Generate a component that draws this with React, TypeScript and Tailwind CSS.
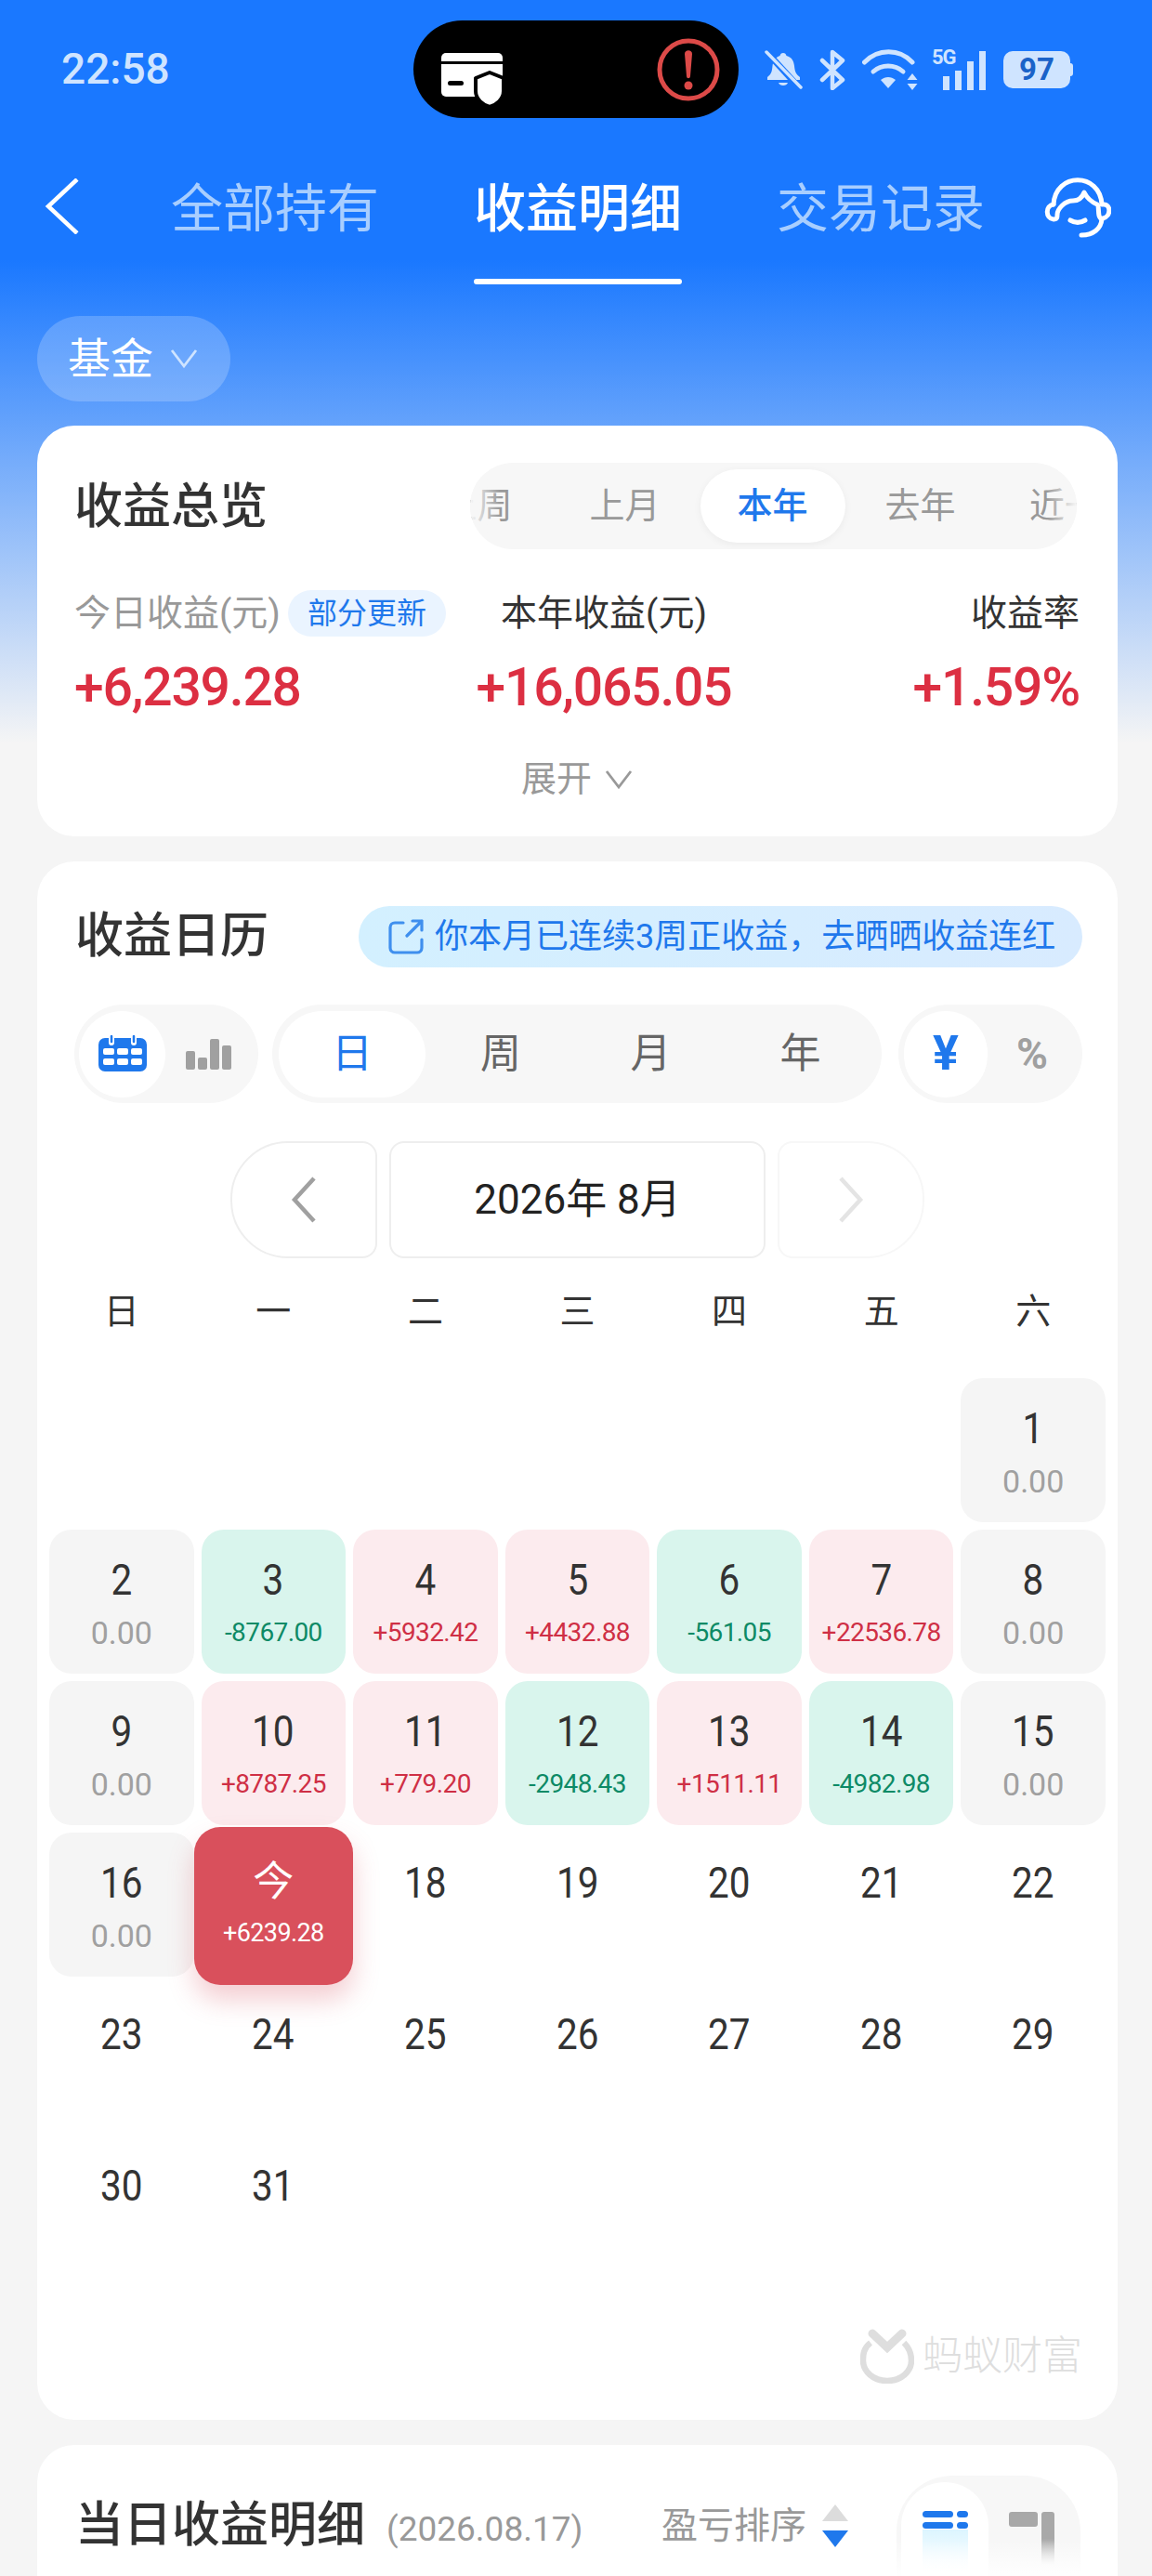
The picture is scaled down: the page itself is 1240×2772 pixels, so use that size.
const font = "font-[Roboto,'Noto_Sans_CJK_SC',sans-serif]"

const StatusIcons = () => {
    return (
        <div className="flex items-center ml-[28px] h-[105px] text-[#cfe4ff]">
            <svg width="41" height="42" viewBox="0 0 41 42" fill="none">
                <path d="M20 3c2 0 3 1 3.500 3 6 1.500 8 6 8.500 11 .5 6 2 9 6 12v3H3v-3c4-3 5-6 5.500-12 .5-5 3-9.500 8-11C17 4 18 3 20 3z" fill="#cfe4ff" />
                <path d="M15 35h10c-1 4-9 4-10 0z" fill="#cfe4ff" />
                <path d="M5 5l33 36" stroke="#1a78ff" strokeWidth="7" />
                <path d="M2 2l37 38" stroke="#cfe4ff" strokeWidth="3.500" strokeLinecap="round" />
            </svg>
            <svg className="ml-[18px]" width="28" height="44" viewBox="0 0 28 44" fill="none" stroke="#cfe4ff" strokeWidth="4.500" strokeLinejoin="round" strokeLinecap="round">
                <path d="M3 12l22 21-11 9V3l11 9L3 33" />
            </svg>
            <svg className="ml-[18px]" width="60" height="44" viewBox="0 0 60 44" fill="none">
                <path d="M2.500 14C17-1 40-1 54 14" stroke="#cfe4ff" strokeWidth="5" strokeLinecap="round" />
                <path d="M12 24c9-8 23-8 32 0" stroke="#cfe4ff" strokeWidth="5" strokeLinecap="round" />
                <path d="M20 33c5-4 11-4 16 0l-8 9z" fill="#cfe4ff" />
                <path d="M54 26l5.500 7h-11zM54 44l5.500-7h-11z" fill="#cfe4ff" />
            </svg>
            <div className="relative ml-[15px] w-[57px] h-[44px]">
                <div className="absolute left-0 -top-[2px] text-[22px] leading-[22px] font-bold tracking-[-1px]">5G</div>
                <div className="absolute left-[12px] bottom-0 flex items-end gap-[6px]">
                    <div className="w-[7px] h-[15px] bg-[#cfe4ff]" />
                    <div className="w-[7px] h-[21px] bg-[#cfe4ff]" />
                    <div className="w-[7px] h-[31px] bg-[#cfe4ff]" />
                    <div className="w-[7px] h-[42px] bg-[#cfe4ff]" />
                </div>
            </div>
            <div className="flex items-center ml-[20px]">
                <div className="w-[72px] h-[40px] rounded-[10px] bg-[#cfe4ff] text-[#1a62c8] flex items-center justify-center text-[33px] font-bold">97</div>
                <div className="w-[3px] h-[14px] rounded-r bg-[#cfe4ff]" />
            </div>
        </div>
    )
}

const Island = () => {
    return (
        <div className="w-[350px] h-[105px] rounded-full bg-black flex items-center justify-between pl-[30px] pr-[20px] shrink-0">
            <svg className="mt-[24px]" width="70" height="60" viewBox="0 0 70 60" fill="none">
                <rect x="0" y="0" width="66" height="47" rx="5" fill="#fff" />
                <rect x="0" y="9" width="66" height="3" fill="#000" />
                <rect x="7" y="30" width="17" height="5" rx="2.500" fill="#000" />
                <path d="M52 21l15 6v14c0 9-8 15-15 17-7-2-15-8-15-17V27z" fill="#fff" stroke="#000" strokeWidth="4" strokeLinejoin="round" />
            </svg>
            <svg width="68" height="68" viewBox="0 0 68 68" fill="none">
                <circle cx="34" cy="34" r="31" stroke="#dc4a48" strokeWidth="5" />
                <path d="M30 17c0-5 8-5 8 0l-2 24c-.2 3-3.800 3-4 0z" fill="#dc4a48" />
                <circle cx="34" cy="51" r="4.500" fill="#dc4a48" />
            </svg>
        </div>
    )
}

const Headset = () => {
    return (
        <svg className="ml-[64px] mt-[7px]" width="72" height="66" viewBox="0 0 72 66" fill="none" stroke="#fff" strokeWidth="5" strokeLinecap="round" strokeLinejoin="round">
            <path d="M10 30C12 -5 60 -5 62 30" />
            <path d="M10 30c-9 1-9 15 0 16 4 0 4-2 4-5 0-6 8-15 17-15 7 0 10-4 12-9 3 6 7 10 14 13 2 1 1 8 2 12 1 3 2 4 4 3 9-2 9-15 1-15" />
            <path d="M62 46c-1 10-9 17-22 17" />
            <path d="M28 47c5 3 11 3 16 0" />
        </svg>
    )
}

const Caret = ({ className }: { className: string }) => {
    return (
        <svg className={className} width="30" height="22" viewBox="0 0 30 22" fill="none" stroke="currentColor" strokeWidth="2.800">
            <path d="M2 2l13 17L28 2" />
        </svg>
    )
}

const ShareIcon = () => {
    return (
        <svg className="mr-[12px] shrink-0" width="38" height="38" viewBox="0 0 38 38" fill="none" stroke="#3f8fee" strokeWidth="3.200" strokeLinecap="round" strokeLinejoin="round">
            <path d="M16 4H7a5 5 0 0 0-5 5v22a5 5 0 0 0 5 5h24a5 5 0 0 0 5-5v-9" />
            <path d="M26 2h10v10M36 2L20 18" />
        </svg>
    )
}

const CalendarIcon = () => {
    return (
        <svg width="54" height="40" viewBox="0 0 54 40" fill="none">
            <rect x="1" y="3" width="52" height="36" rx="7" fill="#1f78ec" />
            <path d="M15 0v8M39 0v8" stroke="#fff" strokeWidth="6" strokeLinecap="round" />
            <path d="M15 1v6M39 1v6" stroke="#1f78ec" strokeWidth="2.500" strokeLinecap="round" />
            <g fill="#fff">
                <rect x="6" y="14" width="12" height="7" rx="2" />
                <rect x="21" y="14" width="12" height="7" rx="2" />
                <rect x="36" y="14" width="12" height="7" rx="2" />
                <rect x="6" y="25" width="12" height="7" rx="2" />
                <rect x="21" y="25" width="12" height="7" rx="2" />
                <rect x="36" y="25" width="12" height="7" rx="2" />
            </g>
        </svg>
    )
}

const BarsIcon = () => {
    return (
        <div className="flex items-end gap-[3px] h-[34px]">
            <div className="w-[10px] h-[20px] rounded-[2px] bg-[#a0a0a0]" />
            <div className="w-[10px] h-[13px] rounded-[2px] bg-[#a0a0a0]" />
            <div className="w-[10px] h-[33px] rounded-[2px] bg-[#a0a0a0]" />
            <div className="w-[10px] h-[26px] rounded-[2px] bg-[#a0a0a0]" />
        </div>
    )
}

const Logo = () => {
    return (
        <div className="flex justify-end items-center mt-[52px] mr-[38px]">
            <svg width="58" height="60" viewBox="0 0 58 60" fill="none">
                <path d="M11 16C3 22 3 30 3 35c0 12 11 22 26 22s26-10 26-22c0-6-2-13-8-19" stroke="#dedede" strokeWidth="6.500" fill="none" />
                <path d="M13 6l16 15L45 6" stroke="#dedede" strokeWidth="9" strokeLinecap="round" fill="none" />
            </svg>
            <div className="ml-[9px] text-[43px] leading-[60px] font-light text-[#dedede]">蚂蚁财富</div>
        </div>
    )
}

type Day = { d: number | string, v?: string, t?: "g" | "r" | "z" | "today" }

const days: Day[] = [
    { d: 1, v: "0.00", t: "z" },
    { d: 2, v: "0.00", t: "z" },
    { d: 3, v: "-8767.00", t: "g" },
    { d: 4, v: "+5932.42", t: "r" },
    { d: 5, v: "+4432.88", t: "r" },
    { d: 6, v: "-561.05", t: "g" },
    { d: 7, v: "+22536.78", t: "r" },
    { d: 8, v: "0.00", t: "z" },
    { d: 9, v: "0.00", t: "z" },
    { d: 10, v: "+8787.25", t: "r" },
    { d: 11, v: "+779.20", t: "r" },
    { d: 12, v: "-2948.43", t: "g" },
    { d: 13, v: "+1511.11", t: "r" },
    { d: 14, v: "-4982.98", t: "g" },
    { d: 15, v: "0.00", t: "z" },
    { d: 16, v: "0.00", t: "z" },
    { d: "今", v: "+6239.28", t: "today" },
    { d: 18 }, { d: 19 }, { d: 20 }, { d: 21 }, { d: 22 },
    { d: 23 }, { d: 24 }, { d: 25 }, { d: 26 }, { d: 27 }, { d: 28 }, { d: 29 },
    { d: 30 }, { d: 31 },
]

const DayCell = ({ day }: { day: Day }) => {
    if (day.t === "today") {
        return (
            <div className="relative z-10 -mx-[8px] -mt-[6px] -mb-[9px] rounded-[28px] bg-[#d9505c] shadow-[0_16px_28px_rgba(217,80,92,0.28)] flex flex-col items-center text-white">
                <div className="mt-[34px] h-[50px] leading-[50px] text-[44px]">{day.d}</div>
                <div className="mt-[10px] h-[40px] leading-[40px] text-[27px] tracking-[-0.6px]">{day.v}</div>
            </div>
        )
    }
    let bg = ""
    let color = ""
    let size = "text-[28px] tracking-[-0.6px]"
    if (day.t === "g") {
        bg = "bg-[#d9f5ed]"
        color = "text-[#0d8a66]"
    }
    if (day.t === "r") {
        bg = "bg-[#fcebee]"
        color = "text-[#cf2f45]"
    }
    if (day.t === "z") {
        bg = "bg-[#f5f5f5]"
        color = "text-[#a0a0a0]"
        size = "text-[34px]"
    }
    return (
        <div className={`rounded-[24px] h-[155px] flex flex-col items-center pt-[29px] ${bg}`}>
            <div className="h-[50px] leading-[50px] text-[46px] text-[#333] scale-x-[0.88]">{day.d}</div>
            {day.v && <div className={`mt-[14px] h-[36px] leading-[36px] ${size} ${color}`}>{day.v}</div>}
        </div>
    )
}

const Overview = () => {
    return (
        <div className="mt-[26px] ml-[40px] mr-[37px] h-[442px] rounded-[40px] bg-white pl-[40px] pr-[41px] pt-[40px]">
            <div className="flex items-center justify-between">
                <div className="mt-[3px] text-[52px] font-medium text-[#333] leading-[60px]">收益总览</div>
                <div className="relative w-[653px] h-[93px] mr-[3px] rounded-full bg-[#f7f7f7] overflow-hidden flex items-center text-[38px] text-[#999]">
                    <div className="flex items-center -ml-[72px]">
                        <div className="w-[159px] shrink-0 text-center">上周</div>
                        <div className="w-[159px] shrink-0 text-center">上月</div>
                        <div className="w-[159px] shrink-0 flex justify-center">
                            <div className="w-[156px] h-[79px] rounded-full bg-white shadow-[0_2px_8px_rgba(0,0,0,0.05)] text-[#1f78ec] font-medium flex items-center justify-center">本年</div>
                        </div>
                        <div className="w-[159px] shrink-0 text-center">去年</div>
                        <div className="w-[159px] shrink-0 pl-[38px] whitespace-nowrap">近一月</div>
                    </div>
                    <div className="absolute left-0 top-0 h-full w-[32px] bg-gradient-to-r from-[#f7f7f7] to-transparent" />
                    <div className="absolute right-0 top-0 h-full w-[32px] bg-gradient-to-l from-[#f7f7f7] to-transparent" />
                </div>
            </div>
            <div className="grid grid-cols-[400px_340px_1fr] items-center mt-[40px] h-[50px] text-[39px]">
                <div className="flex items-center text-[#999]">
                    今日收益(元)
                    <div className="ml-[8px] w-[170px] h-[50px] rounded-full bg-[#eaf4ff] text-[#1f78ec] text-[32px] flex items-center justify-center">部分更新</div>
                </div>
                <div className="text-center text-[#333]">本年收益(元)</div>
                <div className="text-right text-[#333]">收益率</div>
            </div>
            <div className="grid grid-cols-[400px_340px_1fr] items-center mt-[16px] h-[70px] text-[57px] tracking-[-1.2px] font-medium text-[#dc2f42]">
                <div>+6,239.28</div>
                <div className="text-center">+16,065.05</div>
                <div className="text-right">+1.59%</div>
            </div>
            <div className="flex items-center justify-center mt-[46px] h-[50px] text-[38px] text-[#999]">
                展开
                <Caret className="ml-[14px] mt-[2px]" />
            </div>
        </div>
    )
}

const Calendar = () => {
    return (
        <div className="mt-[27px] ml-[40px] mr-[37px] rounded-[40px] bg-white pt-[48px]">
            <div className="flex items-center justify-between pl-[41px] pr-[38px] h-[66px]">
                <div className="text-[52px] font-medium text-[#333] leading-[60px]">收益日历</div>
                <div className="w-[779px] h-[66px] rounded-full bg-gradient-to-r from-[#d3f0ff] to-[#d8ebff] flex items-center pl-[32px] text-[36px] text-[#1f78ec] whitespace-nowrap">
                    <ShareIcon />
                    你本月已连续3周正收益，去晒晒收益连红
                </div>
            </div>
            <div className="flex mt-[40px] pl-[40px] h-[106px]">
                <div className="w-[198px] rounded-full bg-[#f7f7f7] flex items-center pl-[5px] shrink-0">
                    <div className="w-[93px] h-[93px] rounded-full bg-white flex items-center justify-center shrink-0"><CalendarIcon /></div>
                    <div className="ml-[22px]"><BarsIcon /></div>
                </div>
                <div className="ml-[15px] w-[656px] rounded-full bg-[#f7f7f7] flex items-center pl-[7px] shrink-0 text-[44px] text-[#666]">
                    <div className="w-[158px] h-[93px] rounded-full bg-white flex items-center justify-center text-[#1f78ec] shrink-0">日</div>
                    <div className="w-[162px] text-center">周</div>
                    <div className="w-[161px] text-center">月</div>
                    <div className="w-[161px] text-center">年</div>
                </div>
                <div className="ml-[18px] w-[198px] rounded-full bg-[#f7f7f7] flex items-center pl-[6px] shrink-0">
                    <div className="w-[90px] h-[93px] rounded-full bg-white flex items-center justify-center shrink-0 text-[52px] font-bold text-[#1f78ec]">¥</div>
                    <div className="ml-[12px] w-[72px] text-center text-[46px] font-bold text-[#a0a0a0]">%</div>
                </div>
            </div>
            <div className="flex justify-center items-stretch mt-[41px] h-[126px] gap-[13px]">
                <div className="w-[158px] rounded-l-[62px] rounded-r-[16px] border-2 border-[#eeeeee] flex items-center justify-center">
                    <svg width="30" height="50" viewBox="0 0 30 50" fill="none" stroke="#a0a0a0" strokeWidth="4.500">
                        <path d="M26 2L5 25l21 23" />
                    </svg>
                </div>
                <div className="w-[405px] rounded-[16px] border-2 border-[#eeeeee] flex items-center justify-center text-[44px] text-[#222]">2026年 8月</div>
                <div className="w-[158px] rounded-r-[62px] rounded-l-[16px] border-2 border-[#f7f7f7] flex items-center justify-center">
                    <svg width="30" height="50" viewBox="0 0 30 50" fill="none" stroke="#e4e4e4" strokeWidth="4.500">
                        <path d="M4 2l21 23L4 48" />
                    </svg>
                </div>
            </div>
            <div className="grid grid-cols-7 mt-[32px] px-[13px] h-[50px] leading-[50px] gap-x-[8px] text-center text-[38px] text-[#333]">
                {["日", "一", "二", "三", "四", "五", "六"].map((w) => (
                    <div key={w}>{w}</div>
                ))}
            </div>
            <div className="grid grid-cols-7 mt-[47px] mx-[13px] gap-x-[8px] gap-y-[8px] auto-rows-[155px]">
                {[0, 1, 2, 3, 4, 5].map((i) => (
                    <div key={i} />
                ))}
                {days.map((day) => (
                    <DayCell key={day.d} day={day} />
                ))}
            </div>
            <div className="pb-[39px]">
                <Logo />
            </div>
        </div>
    )
}

const Detail = () => {
    return (
        <div className="relative mt-[27px] ml-[40px] mr-[37px] h-[300px] rounded-t-[40px] bg-white pl-[41px] pr-[40px] pt-[33px] flex items-start">
            <div className="h-[108px] flex items-center text-[52px] font-medium text-[#333] whitespace-nowrap">当日收益明细</div>
            <div className="h-[108px] ml-[23px] flex items-center pt-[8px] text-[37px] text-[#999] whitespace-nowrap">(2026.08.17)</div>
            <div className="h-[108px] ml-auto flex items-center text-[39px] text-[#999] whitespace-nowrap">盈亏排序</div>
            <div className="h-[108px] ml-[17px] flex flex-col justify-center gap-[10px]">
                <div className="w-0 h-0 border-x-[14px] border-x-transparent border-b-[18px] border-b-[#dcdcdc]" />
                <div className="w-0 h-0 border-x-[14px] border-x-transparent border-t-[18px] border-t-[#1f78ec]" />
            </div>
            <div className="relative ml-[52px] w-[198px] h-[200px] rounded-t-[60px] bg-[#f7f7f7] overflow-hidden shrink-0">
                <div className="absolute left-[5px] top-[7px] w-[94px] h-[190px] rounded-t-[47px] bg-white" />
                <div className="absolute left-[28px] top-[38px] w-[33px] h-[7px] rounded-full bg-[#1f78ec]" />
                <div className="absolute left-[65px] top-[38px] w-[12px] h-[7px] rounded-full bg-[#1f78ec]" />
                <div className="absolute left-[28px] top-[50px] w-[33px] h-[7px] rounded-full bg-[#1f78ec]" />
                <div className="absolute left-[65px] top-[50px] w-[12px] h-[7px] rounded-full bg-[#1f78ec]" />
                <div className="absolute left-[28px] top-[58px] w-[49px] h-[45px] bg-gradient-to-b from-[#dcf5ff] to-transparent" />
                <div className="absolute left-[121px] top-[39px] w-[31px] h-[16px] rounded-[3px] bg-[#a8a8a8]" />
                <div className="absolute left-[156px] top-[39px] w-[14px] h-[57px] rounded-t-[3px] bg-gradient-to-b from-[#a8a8a8] via-[#a8a8a8] to-[#f7f7f7]" />
                <div className="absolute left-0 top-[70px] w-full h-[40px] bg-gradient-to-b from-transparent to-white" />
                <div className="absolute left-0 top-[108px] w-full h-[100px] bg-white" />
            </div>
        </div>
    )
}

export default function App() {
    return (
        <div className={`relative w-[1240px] h-[2772px] overflow-hidden bg-[linear-gradient(180deg,#1a78ff_0px,#1a78ff_280px,#f5f5f5_800px)] ${font}`}>
            <div className="flex items-start pl-[66px] pt-[22px] h-[150px]">
                <div className="w-[379px] h-[105px] flex items-center text-[46px] font-medium text-[#cfe4ff] shrink-0">22:58</div>
                <Island />
                <StatusIcons />
            </div>
            <div className="flex items-start pl-[48px] pt-[33px] h-[190px]">
                <svg className="mt-[9px] shrink-0" width="38" height="60" viewBox="0 0 38 60" fill="none" stroke="#fff" strokeWidth="4.500">
                    <path d="M35 1L4 30l31 29" />
                </svg>
                <div className="ml-[98px] w-[224px] text-[56px] leading-[84px] text-[#a8ceff] whitespace-nowrap">全部持有</div>
                <div className="ml-[102px] w-[224px] flex flex-col">
                    <div className="text-[56px] leading-[84px] font-medium text-white whitespace-nowrap">收益明细</div>
                    <div className="mt-[33px] h-[6px] rounded-full bg-white" />
                </div>
                <div className="ml-[102px] w-[224px] text-[56px] leading-[84px] text-[#a8ceff] whitespace-nowrap">交易记录</div>
                <Headset />
            </div>
            <div className="ml-[40px] w-[208px] h-[92px] rounded-full bg-white/20 flex items-center pl-[33px] text-[46px] text-white">
                基金
                <Caret className="ml-[18px] text-[#cfe4ff]" />
            </div>
            <Overview />
            <Calendar />
            <Detail />
        </div>
    )
}
